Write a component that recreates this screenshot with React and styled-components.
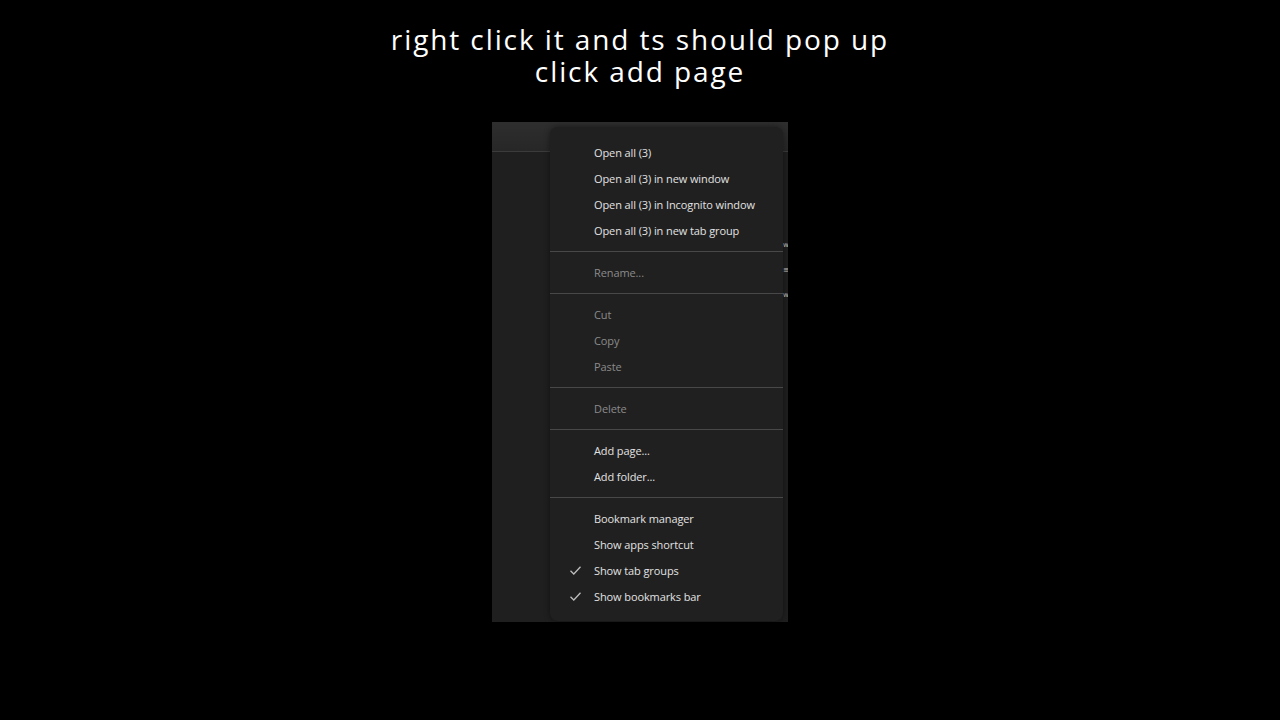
import styled, { createGlobalStyle } from 'styled-components';

const GlobalStyle = createGlobalStyle`
  html, body {
    margin: 0;
    padding: 0;
    background: #000;
  }
  body {
    width: 1280px;
    height: 720px;
    overflow: hidden;
  }
`;

const Page = styled.div`
  width: 1280px;
  height: 720px;
  display: flex;
  flex-direction: column;
  align-items: center;
  background: #000;
`;

const Caption = styled.div`
  margin-top: 23px;
  color: #fff;
  font-family: 'Open Sans', 'DejaVu Sans', sans-serif;
  font-size: 28px;
  font-weight: 500;
  line-height: 32px;
  text-align: center;
  letter-spacing: 1.9px;
`;

const Frame = styled.div`
  position: relative;
  margin-top: 35px;
  width: 296px;
  height: 500px;
  overflow: hidden;
  background: #1f1f1f;
`;

const Toolbar = styled.div`
  height: 29px;
  background: linear-gradient(#2e2e2e, #272727);
  border-bottom: 1px solid #3b3b3b;
`;

const SideGlyphs = styled.div`
  position: absolute;
  right: 0;
  top: 119px;
  width: 5px;
  display: flex;
  flex-direction: column;
  gap: 17px;
  font-family: 'DejaVu Sans', sans-serif;
  font-size: 7px;
  line-height: 8px;
  color: #cfcfcf;
`;

const Menu = styled.div`
  position: absolute;
  left: 58px;
  top: 5px;
  width: 233px;
  padding: 12px 0;
  background: #202020;
  border-radius: 8px;
  box-shadow: 0 0 6px rgba(0, 0, 0, 0.45);
  font-family: 'Open Sans', 'Noto Sans', sans-serif;
  font-size: 11px;
  letter-spacing: -0.1px;
`;

const Item = styled.div`
  height: 26px;
  display: flex;
  align-items: center;
  padding-left: 44px;
  position: relative;
  color: ${(p) => (p.$disabled ? '#8b8b8b' : '#e2e2e2')};
  white-space: nowrap;
`;

const Check = styled.span`
  position: absolute;
  left: 19px;
  top: 8px;
  display: flex;
`;

const Separator = styled.div`
  height: 1px;
  margin: 8px 0 7px;
  background: #484848;
`;

function CheckMark() {
  return (
    <svg width="13" height="11" viewBox="0 0 13 11">
      <path d="M1.5 5.8 L4.8 9 L11.5 1.8" fill="none" stroke="#bdbdbd" strokeWidth="1.3" />
    </svg>
  );
}

const sections = [
  [
    { label: 'Open all (3)' },
    { label: 'Open all (3) in new window' },
    { label: 'Open all (3) in Incognito window' },
    { label: 'Open all (3) in new tab group' },
  ],
  [{ label: 'Rename...', disabled: true }],
  [
    { label: 'Cut', disabled: true },
    { label: 'Copy', disabled: true },
    { label: 'Paste', disabled: true },
  ],
  [{ label: 'Delete', disabled: true }],
  [{ label: 'Add page...' }, { label: 'Add folder...' }],
  [
    { label: 'Bookmark manager' },
    { label: 'Show apps shortcut' },
    { label: 'Show tab groups', checked: true },
    { label: 'Show bookmarks bar', checked: true },
  ],
];

export default function App() {
  return (
    <>
      <GlobalStyle />
      <Page>
        <Caption>
          right click it and ts should pop up
          <br />
          click add page
        </Caption>
        <Frame>
          <Toolbar />
          <SideGlyphs>
            <span>w</span>
            <span>≡</span>
            <span>w</span>
          </SideGlyphs>
          <Menu>
            {sections.map((group, i) => (
              <div key={i}>
                {i > 0 && <Separator />}
                {group.map((it) => (
                  <Item key={it.label} $disabled={it.disabled}>
                    {it.checked && (
                      <Check>
                        <CheckMark />
                      </Check>
                    )}
                    {it.label}
                  </Item>
                ))}
              </div>
            ))}
          </Menu>
        </Frame>
      </Page>
    </>
  );
}
